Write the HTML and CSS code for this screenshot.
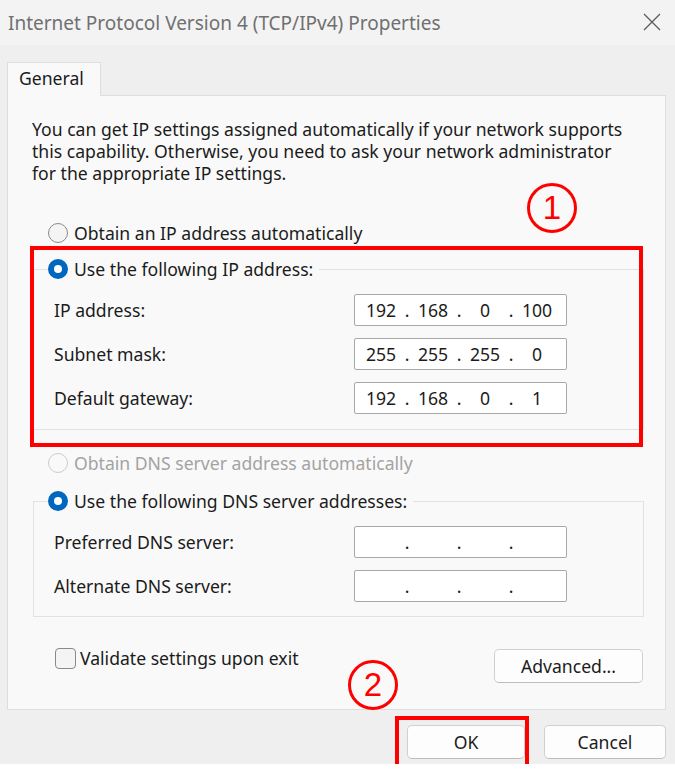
FILE: index.html
```html
<!DOCTYPE html>
<html lang="en">

<head>
  <meta charset="UTF-8" />
  <meta name="viewport" content="width=device-width, initial-scale=1.0" />
  <title>Internet Protocol Version 4 (TCP/IPv4) Properties</title>
  <link rel="stylesheet" href="styles.css">
</head>

<body>
  <div class="window">
    <!-- Title bar -->
    <div class="titlebar">
      <span class="title">Internet Protocol Version 4 (TCP/IPv4) Properties</span>
      <svg class="close" width="18" height="18" viewBox="0 0 18 18">
        <path d="M1 1 L17 17 M17 1 L1 17" stroke="#5c5c5c" stroke-width="1.3" fill="none" />
      </svg>
    </div>

    <div class="tabs">
      <div class="tab">General</div>
    </div>

    <div class="panel">
      <p class="intro">You can get IP settings assigned automatically if your network supports<br>
        this capability. Otherwise, you need to ask your network administrator<br>
        for the appropriate IP settings.</p>

      <label class="radio-row first-radio">
        <span class="radio"></span>Obtain an IP address automatically
      </label>

      <fieldset class="group ip-group">
        <legend><span class="radio checked"></span>Use the following IP address:</legend>
        <div class="field-row">
          <span class="field-label">IP address:</span>
          <div class="ip-box">
            <span class="octet">192</span><span class="dot">.</span><span class="octet">168</span><span class="dot">.</span><span class="octet">0</span><span class="dot">.</span><span class="octet">100</span>
          </div>
        </div>
        <div class="field-row">
          <span class="field-label">Subnet mask:</span>
          <div class="ip-box">
            <span class="octet">255</span><span class="dot">.</span><span class="octet">255</span><span class="dot">.</span><span class="octet">255</span><span class="dot">.</span><span class="octet">0</span>
          </div>
        </div>
        <div class="field-row">
          <span class="field-label">Default gateway:</span>
          <div class="ip-box">
            <span class="octet">192</span><span class="dot">.</span><span class="octet">168</span><span class="dot">.</span><span class="octet">0</span><span class="dot">.</span><span class="octet">1</span>
          </div>
        </div>
      </fieldset>

      <label class="radio-row disabled">
        <span class="radio"></span>Obtain DNS server address automatically
      </label>

      <fieldset class="group dns-group">
        <legend><span class="radio checked"></span>Use the following DNS server addresses:</legend>
        <div class="field-row">
          <span class="field-label">Preferred DNS server:</span>
          <div class="ip-box">
            <span class="octet"></span><span class="dot">.</span><span class="octet"></span><span class="dot">.</span><span class="octet"></span><span class="dot">.</span><span class="octet"></span>
          </div>
        </div>
        <div class="field-row">
          <span class="field-label">Alternate DNS server:</span>
          <div class="ip-box">
            <span class="octet"></span><span class="dot">.</span><span class="octet"></span><span class="dot">.</span><span class="octet"></span><span class="dot">.</span><span class="octet"></span>
          </div>
        </div>
      </fieldset>

      <div class="panel-footer">
        <label class="check-row"><span class="checkbox"></span>Validate settings upon exit</label>
        <button class="btn advanced-btn">Advanced...</button>
      </div>
    </div>

    <div class="dialog-buttons">
      <button class="btn ok-btn">OK</button>
      <button class="btn cancel-btn">Cancel</button>
    </div>

    <!-- Red annotations -->
    <div class="mark-box mark-ip"></div>
    <div class="mark-box mark-ok"></div>
    <div class="mark-circle mark-one">1</div>
    <div class="mark-circle mark-two">2</div>
  </div>
</body>

</html>
```

FILE: styles.css
```css
* {
  margin: 0;
  padding: 0;
  box-sizing: border-box;
}

html {
  background: #ffffff;
}

body {
  font-family: 'Noto Sans', sans-serif;
  font-size: 17.6px;
  color: #1b1b1b;
}

.window {
  position: relative;
  width: 675px;
  height: 764px;
  background: #efefef;
}

.titlebar {
  height: 45px;
  background: #f3f3f3;
  display: flex;
  justify-content: space-between;
  align-items: center;
  padding: 0 14px 0 8px;
}

.title {
  font-size: 19px;
  color: #707070;
}

.close {
  margin-bottom: 1px;
}

.tabs {
  padding: 17px 0 0 7px;
  display: flex;
}

.tab {
  width: 94px;
  height: 34px;
  background: #f9f9f9;
  border: 1px solid #dedede;
  border-bottom: none;
  margin-bottom: -1px;
  position: relative;
  z-index: 1;
  padding: 3px 0 0 11px;
}

.panel {
  margin: 0 9px 0 7px;
  height: 615px;
  background: #f9f9f9;
  border: 1px solid #dedede;
  padding: 22px 22px 0 24px;
}

.intro {
  line-height: 22px;
}

.radio-row {
  display: flex;
  align-items: center;
  height: 22px;
  padding-left: 16px;
}

.first-radio {
  margin-top: 38px;
}

.radio {
  width: 20px;
  height: 20px;
  border-radius: 50%;
  border: 1.5px solid #8a8a8a;
  background: #f4f4f4;
  margin-right: 6px;
  flex-shrink: 0;
}

.radio.checked {
  border: 6px solid #0067c0;
  background: #ffffff;
}

.disabled {
  color: #a3a3a3;
  margin-top: 22px;
}

.disabled .radio {
  border-color: #cccccc;
  background: #f9f9f9;
}

.group {
  border: 1px solid #e2e2e2;
  margin: 14px -1px 0 1px;
  padding: 14px 0 14px 20px;
}

.group legend {
  display: flex;
  align-items: center;
  height: 22px;
  margin-left: -6px;
  padding-right: 6px;
}

.ip-group {
  padding-bottom: 15px;
}

.dns-group {
  margin-top: 16px;
}

.field-row {
  display: flex;
  justify-content: space-between;
  align-items: center;
  height: 32px;
  padding-right: 76px;
}

.field-row + .field-row {
  margin-top: 12px;
}

.ip-box {
  width: 213px;
  height: 32px;
  background: #ffffff;
  border: 1px solid #a8a8a8;
  border-radius: 2px;
  display: flex;
  align-items: center;
  padding-left: 6px;
}

.octet {
  width: 40px;
  text-align: center;
}

.dot {
  width: 12px;
  text-align: center;
}

.panel-footer {
  display: flex;
  justify-content: space-between;
  align-items: flex-start;
  margin-top: 32px;
  padding-left: 23px;
}

.check-row {
  display: flex;
  align-items: center;
  height: 22px;
  margin-top: -2px;
}

.checkbox {
  width: 21px;
  height: 21px;
  border: 1.5px solid #8a8a8a;
  border-radius: 4px;
  background: #f4f4f4;
  margin-right: 4px;
}

.btn {
  font-family: 'Noto Sans', sans-serif;
  font-size: 17.6px;
  color: #1b1b1b;
  background: #fdfdfd;
  border: 1px solid #d0d0d0;
  border-bottom-color: #bdbdbd;
  border-radius: 5px;
  height: 34px;
}

.advanced-btn {
  width: 149px;
}

.dialog-buttons {
  display: flex;
  justify-content: flex-end;
  gap: 19px;
  padding: 15px 9px 0 0;
}

.ok-btn {
  width: 118px;
}

.cancel-btn {
  width: 122px;
}

/* annotations */
.mark-box {
  position: absolute;
  border: 4px solid #ff0000;
}

.mark-ip {
  left: 30px;
  top: 246px;
  width: 613px;
  height: 201px;
}

.mark-ok {
  left: 395px;
  top: 716px;
  width: 134px;
  height: 53px;
}

.mark-circle {
  position: absolute;
  width: 50px;
  height: 50px;
  border: 3.5px solid #ff0000;
  border-radius: 50%;
  color: #ff0000;
  font-family: 'Liberation Sans', sans-serif;
  font-size: 33px;
  display: flex;
  align-items: center;
  justify-content: center;
}

.mark-one {
  left: 527px;
  top: 183px;
}

.mark-two {
  left: 348px;
  top: 660px;
}
```
